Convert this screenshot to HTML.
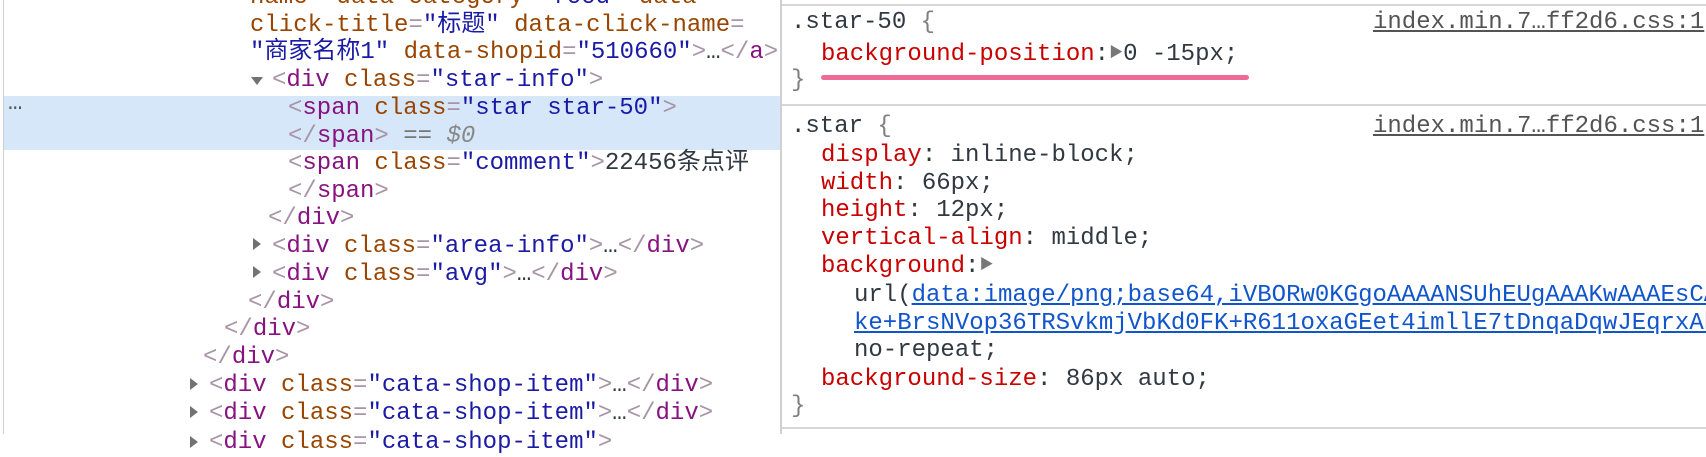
<!DOCTYPE html>
<html><head><meta charset="utf-8"><style>
html,body{margin:0;padding:0;background:#fff;}
body{width:1706px;height:434px;position:relative;overflow:hidden;font-family:"Liberation Mono","Noto Sans CJK SC",monospace;font-size:24px;}
.l{position:absolute;white-space:pre;line-height:27.6px;height:27.6px;}
.t{color:#881280}.b{color:#a894a6}.an{color:#994500}.av{color:#1a1aa6}.tx{color:#303942}
.p{color:#c80000}.v{color:#303942}.g{color:#808080}
.lk{color:#1155cc;text-decoration:underline}
.f{color:#545454;text-decoration:underline}
.tri{position:absolute;width:0;height:0;}
.tr{border-top:6px solid transparent;border-bottom:6px solid transparent;border-left:8px solid #727272;}
.td{border-left:6px solid transparent;border-right:6px solid transparent;border-top:8px solid #727272;}
#right{position:absolute;left:782px;top:0;width:924px;height:434px;overflow:hidden;}
</style></head><body>
<div style="position:absolute;left:3px;top:0;width:1px;height:434px;background:#d0d0d0"></div>
<div style="position:absolute;left:4px;top:96px;width:777px;height:54px;background:#d5e7f9"></div>
<div class="l" style="left:8px;top:90px;color:#555">…</div>
<div style="position:absolute;left:780px;top:0;width:2px;height:434px;background:#d0d0d0"></div>

<div class="l" style="left:250px;top:-16px"><span class="an">name</span><span class="b">=</span><span class="av">"</span><span class="an">data-category</span><span class="b">=</span><span class="av">"food"</span> <span class="an">data-</span></div>
<div class="l" style="left:250px;top:12px"><span class="an">click-title</span><span class="b">=</span><span class="av">"标题"</span> <span class="an">data-click-name</span><span class="b">=</span></div>
<div class="l" style="left:250px;top:39px"><span class="av">"商家名称1"</span> <span class="an">data-shopid</span><span class="b">=</span><span class="av">"510660"</span><span class="b">&gt;</span><span class="tx">…</span><span class="b">&lt;/</span><span class="t">a</span><span class="b">&gt;</span></div>
<div class="tri td" style="left:251px;top:77px"></div>
<div class="l" style="left:272px;top:67px"><span class="b">&lt;</span><span class="t">div</span> <span class="an">class</span><span class="b">=</span><span class="av">"star-info"</span><span class="b">&gt;</span></div>
<div class="l" style="left:288px;top:95px"><span class="b">&lt;</span><span class="t">span</span> <span class="an">class</span><span class="b">=</span><span class="av">"star star-50"</span><span class="b">&gt;</span></div>
<div class="l" style="left:288px;top:123px"><span class="b">&lt;/</span><span class="t">span</span><span class="b">&gt;</span> <span style="color:#777">==</span> <i style="color:#888">$0</i></div>
<div class="l" style="left:288px;top:150px"><span class="b">&lt;</span><span class="t">span</span> <span class="an">class</span><span class="b">=</span><span class="av">"comment"</span><span class="b">&gt;</span><span class="tx">22456条点评</span></div>
<div class="l" style="left:288px;top:178px"><span class="b">&lt;/</span><span class="t">span</span><span class="b">&gt;</span></div>
<div class="l" style="left:268px;top:205px"><span class="b">&lt;/</span><span class="t">div</span><span class="b">&gt;</span></div>
<div class="tri tr" style="left:253px;top:238px"></div>
<div class="l" style="left:272px;top:233px"><span class="b">&lt;</span><span class="t">div</span> <span class="an">class</span><span class="b">=</span><span class="av">"area-info"</span><span class="b">&gt;</span><span class="tx">…</span><span class="b">&lt;/</span><span class="t">div</span><span class="b">&gt;</span></div>
<div class="tri tr" style="left:253px;top:266px"></div>
<div class="l" style="left:272px;top:261px"><span class="b">&lt;</span><span class="t">div</span> <span class="an">class</span><span class="b">=</span><span class="av">"avg"</span><span class="b">&gt;</span><span class="tx">…</span><span class="b">&lt;/</span><span class="t">div</span><span class="b">&gt;</span></div>
<div class="l" style="left:248px;top:289px"><span class="b">&lt;/</span><span class="t">div</span><span class="b">&gt;</span></div>
<div class="l" style="left:224px;top:316px"><span class="b">&lt;/</span><span class="t">div</span><span class="b">&gt;</span></div>
<div class="l" style="left:203px;top:344px"><span class="b">&lt;/</span><span class="t">div</span><span class="b">&gt;</span></div>
<div class="tri tr" style="left:190px;top:378px"></div>
<div class="l" style="left:209px;top:372px"><span class="b">&lt;</span><span class="t">div</span> <span class="an">class</span><span class="b">=</span><span class="av">"cata-shop-item"</span><span class="b">&gt;</span><span class="tx">…</span><span class="b">&lt;/</span><span class="t">div</span><span class="b">&gt;</span></div>
<div class="tri tr" style="left:190px;top:406px"></div>
<div class="l" style="left:209px;top:400px"><span class="b">&lt;</span><span class="t">div</span> <span class="an">class</span><span class="b">=</span><span class="av">"cata-shop-item"</span><span class="b">&gt;</span><span class="tx">…</span><span class="b">&lt;/</span><span class="t">div</span><span class="b">&gt;</span></div>
<div class="tri tr" style="left:190px;top:436px"></div>
<div class="l" style="left:209px;top:429px"><span class="b">&lt;</span><span class="t">div</span> <span class="an">class</span><span class="b">=</span><span class="av">"cata-shop-item"</span><span class="b">&gt;</span></div>

<div id="right">
<div style="position:absolute;left:0;top:4px;width:924px;height:2px;background:#d6d6d6"></div>
<div style="position:absolute;left:0;top:104px;width:924px;height:2px;background:#d6d6d6"></div>
<div style="position:absolute;left:0;top:427px;width:924px;height:2px;background:#d6d6d6"></div>
<div class="l" style="left:9px;top:9px"><span class="v">.star-50</span> <span class="g">{</span></div>
<div class="l" style="left:591px;top:9px"><span class="f">index.min.7…ff2d6.css:1</span></div>
<div class="l" style="left:39px;top:41px"><span class="p">background-position</span><span class="v">:</span><span style="color:#777;font-size:14px;vertical-align:3px">▶</span><span class="v">0 -15px;</span></div>
<div style="position:absolute;left:39px;top:75px;width:428px;height:5px;border-radius:3px;background:#ee6b97"></div>
<div class="l" style="left:9px;top:67px"><span class="g">}</span></div>
<div class="l" style="left:9px;top:113px"><span class="v">.star</span> <span class="g">{</span></div>
<div class="l" style="left:591px;top:113px"><span class="f">index.min.7…ff2d6.css:1</span></div>
<div class="l" style="left:39px;top:142px"><span class="p">display</span><span class="v">: inline-block;</span></div>
<div class="l" style="left:39px;top:170px"><span class="p">width</span><span class="v">: 66px;</span></div>
<div class="l" style="left:39px;top:197px"><span class="p">height</span><span class="v">: 12px;</span></div>
<div class="l" style="left:39px;top:225px"><span class="p">vertical-align</span><span class="v">: middle;</span></div>
<div class="l" style="left:39px;top:253px"><span class="p">background</span><span class="v">:</span><span style="color:#777;font-size:14px;vertical-align:3px">▶</span></div>
<div class="l" style="left:72px;top:282px"><span class="v">url(</span><span class="lk">data:image/png;base64,iVBORw0KGgoAAAANSUhEUgAAAKwAAAEsCAAAB</span></div>
<div class="l" style="left:72px;top:310px"><span class="lk">ke+BrsNVop36TRSvkmjVbKd0FK+R611oxaGEet4imllE7tDnqaDqwJEqrxAbc</span></div>
<div class="l" style="left:72px;top:337px"><span class="v">no-repeat;</span></div>
<div class="l" style="left:39px;top:366px"><span class="p">background-size</span><span class="v">: 86px auto;</span></div>
<div class="l" style="left:9px;top:393px"><span class="g">}</span></div>
</div>
</body></html>
